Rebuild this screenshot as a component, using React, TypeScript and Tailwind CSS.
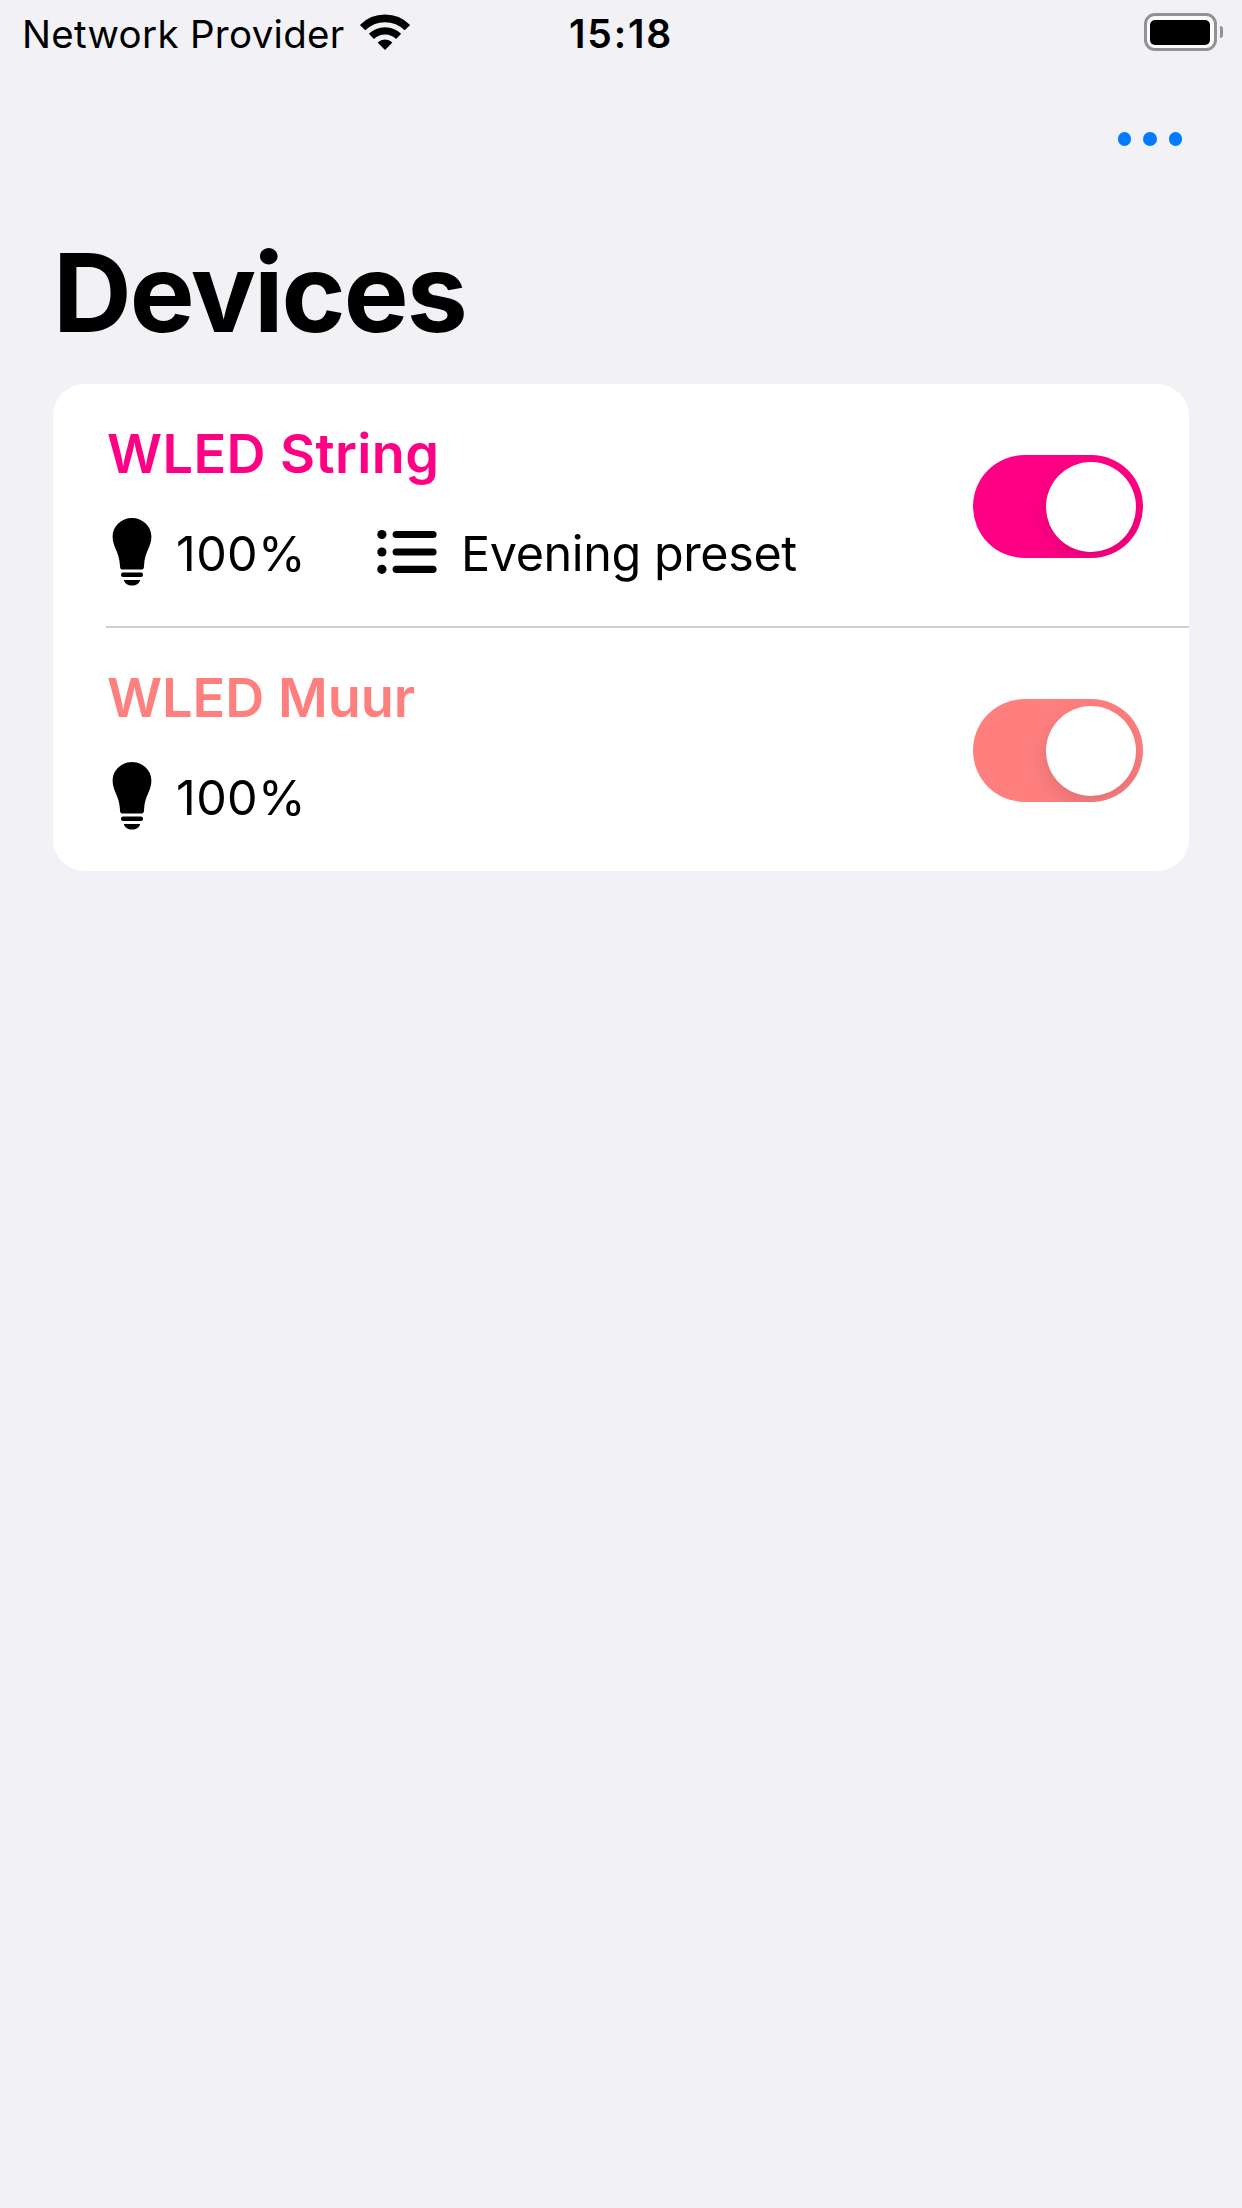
import { useState } from "react";

function WifiIcon() {
  return (
    <svg className="block h-9 w-[50px] overflow-visible" viewBox="0 0 50 36" fill="none">
      <path d="M2.6 13.6a31.7 31.7 0 0 1 44.8 0" stroke="#000" strokeWidth="7.6" />
      <path d="M11.4 22.4a19.3 19.3 0 0 1 27.2 0" stroke="#000" strokeWidth="7.2" />
      <path d="M25 36l-7.4-7.4a10.5 10.5 0 0 1 14.8 0z" fill="#000" />
    </svg>
  );
}

function BatteryIcon() {
  return (
    <div className="flex items-center gap-[3px]">
      <div className="h-[38px] w-[73px] rounded-[11px] border-3 border-[#929295] bg-[#fafafc] p-[3.5px]">
        <div className="h-full w-full rounded-[5px] bg-black" />
      </div>
      <div className="h-3 w-[3.5px] rounded-r-full bg-[#929295]" />
    </div>
  );
}

function BulbIcon() {
  return (
    <svg className="block h-[68px] w-10 shrink-0" viewBox="0 0 40 68" fill="#000">
      <path d="M20 0C30.8 0 39.4 8.2 39.4 18.6c0 10.6-6.7 15.4-7.3 28.4-.1 2.8-.4 4.6-2.2 4.6H10.1c-1.8 0-2.1-1.8-2.2-4.6C7.3 34 .6 29.2.6 18.6.6 8.2 9.2 0 20 0z" />
      <rect x="9" y="54.6" width="22" height="4.4" rx="2" />
      <path d="M11.8 62h16.4c-.8 3.300-4 5.600-8.200 5.600s-7.400-2.300-8.200-5.600z" />
    </svg>
  );
}

function ListIcon() {
  return (
    <svg className="block h-[46px] w-[60px] shrink-0" viewBox="0 0 60 46" fill="#000">
      {[5.5, 23, 40.3].map((y) => (
        <g key={y}>
          <circle cx="4.9" cy={y} r="4.6" />
          <rect x="15.6" y={y - 3.6} width="44" height="7.2" rx="3.6" />
        </g>
      ))}
    </svg>
  );
}

function Toggle({ color, label }: { color: string; label: string }) {
  const [on, setOn] = useState(true);
  return (
    <button
      role="switch"
      aria-checked={on}
      aria-label={label}
      onClick={() => setOn(!on)}
      className={`flex h-[103px] w-[170px] items-center overflow-hidden rounded-full px-[7px] ${
        on ? `justify-end ${color}` : "justify-start bg-gray-200"
      }`}
    >
      <span className="size-[90px] rounded-full bg-white shadow-[0_8px_22px_rgba(0,0,0,0.12)]" />
    </button>
  );
}

interface Device {
  name: string;
  text: string;
  fill: string;
  tracking: string;
  preset?: string;
}

const devices: Device[] = [
  { name: "WLED String", text: "text-[#ff0084]", fill: "bg-[#ff0084]", tracking: "tracking-[0.4px]", preset: "Evening preset" },
  { name: "WLED Muur", text: "text-[#ff7f7f]", fill: "bg-[#ff7f7f]", tracking: "tracking-[0px]" },
];

function DeviceRow({ device, divided }: { device: Device; divided: boolean }) {
  return (
    <li className="ml-[53px]">
      <div
        className={`flex items-start justify-between pr-[46px] ${
          divided ? "h-[244px] border-b-2 border-[#cfcfd1]" : "h-[243px]"
        }`}
      >
        <div className="flex flex-col pt-[38px]">
          <h2 className={`ml-[1px] h-16 text-[54px] leading-16 font-semibold whitespace-nowrap ${device.text} ${device.tracking}`}>
            {device.name}
          </h2>
          <div className="mt-8 flex h-[68px] items-center pl-[6px] text-[48.5px] leading-[68px] whitespace-nowrap">
            <BulbIcon />
            <span className="ml-6 w-[201px] pt-[4px] tracking-[0.4px]">100%</span>
            {device.preset && (
              <>
                <ListIcon />
                <span className="ml-6 pt-[4px] tracking-[-0.4px]">{device.preset}</span>
              </>
            )}
          </div>
        </div>
        <div className="pt-[71px]">
          <Toggle color={device.fill} label={device.name} />
        </div>
      </div>
    </li>
  );
}

export default function App() {
  return (
    <main className="flex h-[2208px] w-[1242px] flex-col bg-[#f2f1f6] font-['Inter',sans-serif] text-black">
      <header className="grid h-16 grid-cols-[1fr_auto_1fr] items-center pr-[19px] pl-[22px]">
        <div className="flex items-center gap-[15px] text-[38.5px] leading-10">
          <span className="pt-[3px] tracking-[0.3px] whitespace-nowrap">Network Provider</span>
          <WifiIcon />
        </div>
        <time className="pt-[3px] pr-[3px] text-[39px] leading-10 font-semibold tracking-[1.8px]">15:18</time>
        <div className="flex justify-end">
          <BatteryIcon />
        </div>
      </header>
      <nav className="flex h-[150px] items-center justify-end pr-[60px]">
        <button aria-label="More" className="flex gap-3">
          <span className="size-[13.5px] rounded-full bg-[#007aff]" />
          <span className="size-[13.5px] rounded-full bg-[#007aff]" />
          <span className="size-[13.5px] rounded-full bg-[#007aff]" />
        </button>
      </nav>
      <h1 className="mt-[13px] ml-[53px] h-[130px] text-[109px] leading-[130px] font-bold tracking-[-2px]">Devices</h1>
      <ul className="mx-[53px] mt-[27px] rounded-[32px] bg-white">
        {devices.map((d, i) => (
          <DeviceRow key={d.name} device={d} divided={i < devices.length - 1} />
        ))}
      </ul>
    </main>
  );
}
